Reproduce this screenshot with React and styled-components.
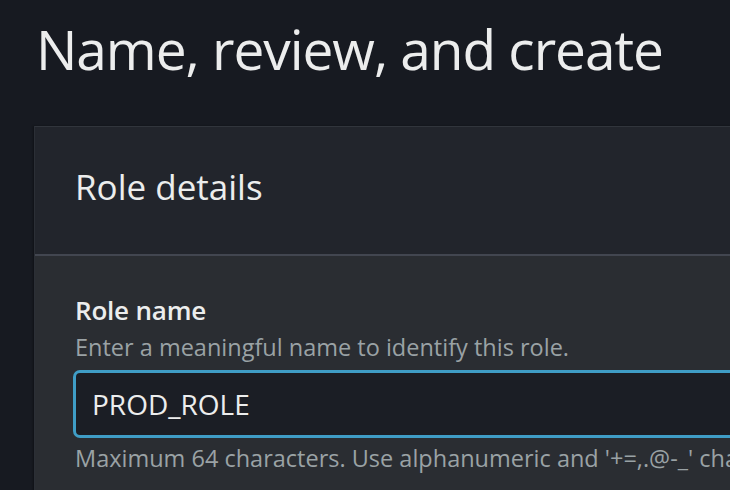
import React from "react";
import styled, { createGlobalStyle } from "styled-components";

const Global = createGlobalStyle`
  html, body {
    margin: 0;
    padding: 0;
    background: #171a21;
    overflow: hidden;
  }
  body {
    font-family: "Open Sans", "Noto Sans", sans-serif;
    color: #eaeded;
  }
`;

const Page = styled.main`
  padding: 15px 0 0 34px;
  min-height: 490px;
  box-sizing: border-box;
`;

const Title = styled.h1`
  margin: 0 0 0 2px;
  font-size: 55px;
  line-height: 67px;
  font-weight: 400;
  letter-spacing: -1.05px;
  color: #eceded;
`;

const Card = styled.section`
  margin-top: 44px;
  margin-right: -60px;
  background: #2a2d32;
  border-top: 1px solid #31353c;
  border-left: 1px solid #2b2f36;
  box-shadow: -1px 0 2px rgba(0, 0, 0, 0.35);
`;

const CardHeader = styled.header`
  background: #22252c;
  height: 129px;
  box-sizing: border-box;
  padding: 38px 0 0 40px;
  border-bottom: 2px solid #424650;
`;

const CardTitle = styled.h2`
  margin: 0;
  font-size: 35px;
  line-height: 44px;
  font-weight: 400;
  letter-spacing: 0;
  color: #eceded;
`;

const CardBody = styled.div`
  padding: 37px 0 40px 38px;
`;

const Field = styled.div`
  display: flex;
  flex-direction: column;
`;

const Label = styled.label`
  padding-left: 2px;
  font-size: 26px;
  line-height: 34px;
  font-weight: 600;
  letter-spacing: -0.2px;
  color: #eceded;
`;

const Hint = styled.div`
  padding-left: 2px;
  font-size: 23.5px;
  line-height: ${(p) => p.$lh || 30}px;
  margin-top: ${(p) => p.$gap || 0}px;
  color: #9aa2a5;
  white-space: nowrap;
`;

const Input = styled.input`
  margin-top: 7px;
  width: 100%;
  height: 68px;
  box-sizing: border-box;
  background: #1b1e25;
  border: 3px solid #3f9dc6;
  border-radius: 7px;
  padding: 0 0 0 16px;
  font-family: "Open Sans", "Noto Sans", sans-serif;
  font-size: 28px;
  color: #eceded;
  outline: none;
`;

export default function App() {
  return (
    <>
      <Global />
      <Page>
        <Title>Name, review, and create</Title>
        <Card>
          <CardHeader>
            <CardTitle>Role details</CardTitle>
          </CardHeader>
          <CardBody>
            <Field>
              <Label htmlFor="role-name">Role name</Label>
              <Hint $gap={4} $lh={32}>
                Enter a meaningful name to identify this role.
              </Hint>
              <Input id="role-name" defaultValue="PROD_ROLE" readOnly />
              <Hint $gap={5}>
                Maximum 64 characters. Use alphanumeric and '+=,.@-_' characters.
              </Hint>
            </Field>
          </CardBody>
        </Card>
      </Page>
    </>
  );
}
